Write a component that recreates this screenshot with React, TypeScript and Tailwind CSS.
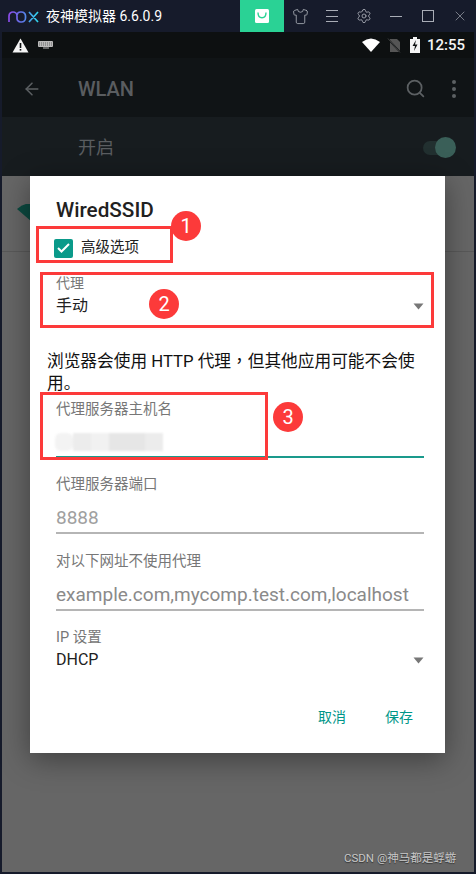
import { ArrowLeft, Search, Shirt, Settings, X } from 'lucide-react';

const Arrow = () => (
  <svg width="11" height="7" viewBox="0 0 11 7" className="shrink-0">
    <path d="M0.5 0.5h10L5.5 6.5z" fill="#777" />
  </svg>
);

const Marker = ({ n, className }: { n: number; className: string }) => (
  <div className={`absolute w-[30px] h-[30px] rounded-full bg-[#fc3a3a] text-white text-[20px] leading-[30px] text-center ${className}`}>{n}</div>
);

const Field = ({ label, value, valueColor, className }: { label: string; value: string; valueColor: string; className: string }) => (
  <div className={className}>
    <div className="text-[14.5px] leading-[18px] text-[#777]">{label}</div>
    <div className={`mt-[12px] text-[19px] leading-[24px] whitespace-nowrap ${valueColor}`}>{value}</div>
    <div className="mt-[2px] h-0.5 bg-[#b5b5b5]" />
  </div>
);

export default function App() {
  return (
    <div className="relative w-[476px] h-[874px] overflow-hidden flex flex-col bg-[#161b2b] font-[family-name:Roboto,'Noto_Sans_CJK_SC',sans-serif]">
      {/* emulator title bar */}
      <div className="h-8 flex items-center shrink-0">
        <svg width="31" height="13" viewBox="0 0 31 13" className="ml-[8px]">
          <defs>
            <linearGradient id="nox" x1="0" x2="1" y1="0" y2="0">
              <stop offset="0" stopColor="#8a4be8" />
              <stop offset="0.5" stopColor="#5b7be8" />
              <stop offset="1" stopColor="#2fd8ee" />
            </linearGradient>
          </defs>
          <path d="M1 12V6a4 4 0 0 1 8 0v2.5a3.5 3.5 0 0 0 3.5 3.5h1a4 4 0 0 0 4-4V6a4 4 0 0 0-4-4h-1a3.5 3.5 0 0 0-3.5 3M21 2l9 10M30 2l-9 10" fill="none" stroke="url(#nox)" strokeWidth="1.7" />
        </svg>
        <span className="ml-[7px] text-[14px] text-white">夜神模拟器 6.6.0.9</span>
        <div className="ml-auto flex items-center h-8">
          <div className="w-[44px] h-8 bg-[#2ad295] flex items-center justify-center">
            <svg width="14" height="14" viewBox="0 0 14 14">
              <rect width="14" height="14" rx="1.5" fill="#fff" />
              <path d="M3 3.5c0 7 8 7 8 0" fill="none" stroke="#2ad295" strokeWidth="1.4" />
            </svg>
          </div>
          <div className="w-[32px] flex justify-center"><Shirt size={17} strokeWidth={1.2} color="#a9adb6" /></div>
          <div className="w-[32px] flex flex-col gap-[4.5px] items-center">
            <div className="w-3 h-px bg-[#a9adb6]" />
            <div className="w-3 h-px bg-[#a9adb6]" />
            <div className="w-3 h-px bg-[#a9adb6]" />
          </div>
          <div className="w-[32px] flex justify-center"><Settings size={16} strokeWidth={1.3} color="#a9adb6" /></div>
          <div className="w-[32px] flex justify-center"><div className="w-3 h-px bg-[#a9adb6]" /></div>
          <div className="w-[32px] flex justify-center"><div className="w-3 h-3 border border-[#a9adb6]" /></div>
          <div className="w-[32px] pr-[1px] flex justify-center"><X size={16} strokeWidth={1} color="#a9adb6" /></div>
        </div>
      </div>

      {/* android screen */}
      <div className="flex-1 mx-0.5 mb-0.5 flex flex-col bg-[#666]">
        <div className="h-[26px] shrink-0 bg-[#0d1011] flex items-center pl-[10px] pr-[9px]">
          <svg width="17" height="15" viewBox="0 0 17 15">
            <path d="M8.5 0.5L16.5 14.5H0.5z" fill="#f4f4f4" />
            <rect x="7.7" y="5" width="1.6" height="5" fill="#0d1011" />
            <rect x="7.7" y="11" width="1.6" height="1.6" fill="#0d1011" />
          </svg>
          <svg width="16" height="8" viewBox="0 0 16 8" className="ml-[9px]">
            <rect width="15" height="6" rx="1" fill="#bbb" />
            <path d="M1 2h13M1 4h13" stroke="#0d1011" strokeWidth="0.5" strokeDasharray="1 1" />
            <path d="M5 7h6" stroke="#bbb" />
          </svg>
          <div className="ml-auto flex items-center">
            <svg width="18" height="14" viewBox="0 0 18 14">
              <path d="M0 4Q9 -3 18 4L9 14z" fill="#fff" />
            </svg>
            <svg width="14" height="15" viewBox="0 0 14 15" className="ml-[7px]">
              <path d="M3 1h7l3 3v10H3z" fill="#555" />
              <path d="M1 1l12 13" stroke="#0d1011" strokeWidth="1.5" />
              <path d="M1 0.5l12 14" stroke="#555" strokeWidth="0.7" />
            </svg>
            <svg width="10" height="16" viewBox="0 0 10 16" className="ml-[9px]">
              <path d="M3 0h4v2h3v14H0V2h3z" fill="#f4f4f4" />
              <path d="M6 3L2.5 9H5l-1 5 3.5-6.5H5z" fill="#0d1011" />
            </svg>
            <span className="ml-[7px] text-[15px] font-medium text-[#f4f4f4]">12:55</span>
          </div>
        </div>

        <div className="h-[59px] shrink-0 bg-[#101416] flex items-center pl-[20px] pr-[16px] pt-[2px]">
          <ArrowLeft size={20} strokeWidth={1.8} color="#5c6063" />
          <span className="ml-[36px] text-[20px] font-medium text-[#5a5d60]">WLAN</span>
          <Search size={21} strokeWidth={2} color="#5c6063" className="ml-auto" />
          <div className="ml-[26px] mr-[2px] flex flex-col gap-[3px]">
            <div className="w-1 h-1 rounded-full bg-[#5c6063]" />
            <div className="w-1 h-1 rounded-full bg-[#5c6063]" />
            <div className="w-1 h-1 rounded-full bg-[#5c6063]" />
          </div>
        </div>

        <div className="h-[59px] shrink-0 bg-[#171c1f] flex items-center pl-[76px] pr-[19px] pt-[2px]">
          <span className="text-[18px] text-[#5a5d60]">开启</span>
          <div className="ml-auto relative w-[32px] h-[14px] rounded-full bg-[#223030]">
            <div className="absolute -right-[1px] -top-[3.5px] w-[21px] h-[21px] rounded-full bg-[#3a5f58]" />
          </div>
        </div>

        <div className="h-[76px] shrink-0 border-b border-[#595959] pl-[15px] pt-[28px]">
          <svg width="20" height="18" viewBox="0 0 20 18">
            <path d="M0 5Q8 -2 16 0L15 18z" fill="#0b4a40" />
          </svg>
        </div>
      </div>

      {/* wifi dialog */}
      <div className="absolute left-[30px] top-[176px] w-[415px] h-[577px] bg-white shadow-[0_6px_28px_rgba(0,0,0,0.4)] pl-[26px] pr-[21px] text-[#212121]">
        <div className="mt-[21px] text-[20.7px] leading-[26px] font-medium">WiredSSID</div>

        <div className="mt-[15px] flex items-center h-5">
          <div className="-ml-[2px] w-[19px] h-[19px] rounded-[2px] bg-[#0a9a8a] flex items-center justify-center">
            <svg width="13" height="10" viewBox="0 0 13 10">
              <path d="M1 5l3.5 3.5L12 1" fill="none" stroke="#fff" strokeWidth="2" />
            </svg>
          </div>
          <span className="ml-[8px] text-[14.5px]">高级选项</span>
        </div>

        <div className="mt-[16px] text-[14px] leading-[18px] text-[#777]">代理</div>
        <div className="mt-[3px] flex items-center justify-between h-[22px]">
          <span className="text-[16px]">手动</span>
          <Arrow />
        </div>

        <p className="mt-[32px] -ml-[9px] text-[16.7px] leading-[22px] text-[#111]">
          浏览器会使用 HTTP 代理<span className="font-[family-name:'Noto_Sans_CJK_TC',sans-serif]">，</span>但其他应用可能不会使用。
        </p>

        <div className="mt-[6px] text-[14.5px] leading-[18px] text-[#777]">代理服务器主机名</div>
        <div className="mt-[14px] h-[18px] flex -ml-[1px] blur-[1px]">
          <div className="w-[18px] bg-[#f3f3f3] rounded-md" />
          <div className="w-[18px] bg-[#ececec]" />
          <div className="w-[18px] bg-[#f1f1f1]" />
          <div className="w-[36px] bg-[#e6e6e6]" />
          <div className="w-[18px] bg-[#ececec]" />
        </div>
        <div className="mt-[5px] h-0.5 bg-[#1a9a8c]" />

        <Field className="mt-[18px]" label="代理服务器端口" value="8888" valueColor="text-[#a0a0a0]" />
        <Field className="mt-[19px]" label="对以下网址不使用代理" value="example.com,mycomp.test.com,localhost" valueColor="text-[#8a8a8a]" />

        <div className="mt-[18px] text-[14.5px] leading-[18px] text-[#777]">IP 设置</div>
        <div className="mt-[2px] flex items-center justify-between h-[22px]">
          <span className="text-[16px]">DHCP</span>
          <Arrow />
        </div>

        <div className="mt-[36px] flex justify-end gap-[39px] pr-[11px] text-[14px] leading-[20px] text-[#009688]">
          <span>取消</span>
          <span>保存</span>
        </div>
      </div>

      {/* red annotations */}
      <div className="absolute left-[36px] top-[226px] w-[137px] h-[37px] border-[3px] border-[#fc3a3a]" />
      <div className="absolute left-[40px] top-[272px] w-[394px] h-[56px] border-[3px] border-[#fc3a3a]" />
      <div className="absolute left-[40px] top-[392px] w-[228px] h-[68px] border-[3px] border-[#fc3a3a]" />
      <Marker n={1} className="left-[171px] top-[211px]" />
      <Marker n={2} className="left-[149px] top-[289px]" />
      <Marker n={3} className="left-[273px] top-[402px]" />

      <div className="absolute left-[344px] top-[850px] text-[11.5px] leading-4 text-[#c8c8c8] [text-shadow:0_1px_1px_rgba(0,0,0,0.5)]">CSDN @神马都是蜉蝣</div>
    </div>
  );
}
